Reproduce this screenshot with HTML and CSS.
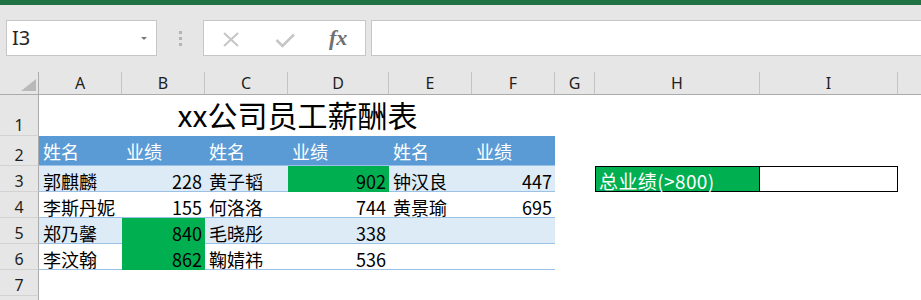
FILE: index.html
```html
<!DOCTYPE html>
<html lang="zh">
<head>
<meta charset="utf-8">
<title>xx公司员工薪酬表</title>
<link rel="stylesheet" href="styles.css">
</head>
<body>
<div class="titlebar"></div>
<div class="toolbar">
  <div class="namebox"><span class="ref">I3</span><span class="caret"></span></div>
  <div class="grip"><i></i><i></i><i></i></div>
  <div class="fbtns">
    <span class="slot"><svg class="ico-x" width="16" height="15" viewBox="0 0 16 15"><path d="M1 1 L15 14 M15 1 L1 14" stroke="#C6C6C6" stroke-width="2" fill="none"/></svg></span>
    <span class="slot"><svg class="ico-ok" width="20" height="15" viewBox="0 0 20 15"><path d="M1.5 7 L7.5 13 L19 1.5" stroke="#C6C6C6" stroke-width="2.6" fill="none"/></svg></span>
    <span class="slot"><span class="fx">fx</span></span>
  </div>
  <div class="finput"></div>
</div>
<div class="sheet">
  <div class="corner"><span class="tri"></span></div>
  <div class="ch">A</div><div class="ch">B</div><div class="ch">C</div><div class="ch">D</div><div class="ch">E</div><div class="ch">F</div><div class="ch">G</div><div class="ch">H</div><div class="ch">I</div><div class="ch last"></div>

  <div class="rh">1</div>
  <div class="c title">xx公司员工薪酬表</div>
  <div class="c"></div><div class="c"></div><div class="c"></div><div class="c"></div>

  <div class="rh">2</div>
  <div class="c t th">姓名</div><div class="c t th">业绩</div><div class="c t th">姓名</div><div class="c t th">业绩</div><div class="c t th">姓名</div><div class="c t th">业绩</div>
  <div class="c"></div><div class="c"></div><div class="c"></div><div class="c"></div>

  <div class="rh">3</div>
  <div class="c t band">郭麒麟</div><div class="c t band num">228</div><div class="c t band">黄子韬</div><div class="c t band num g">902</div><div class="c t band">钟汉良</div><div class="c t band num">447</div>
  <div class="c"></div><div class="c total">总业绩(&gt;800)</div><div class="c result"></div><div class="c"></div>

  <div class="rh">4</div>
  <div class="c t">李斯丹妮</div><div class="c t num">155</div><div class="c t">何洛洛</div><div class="c t num">744</div><div class="c t">黄景瑜</div><div class="c t num">695</div>
  <div class="c"></div><div class="c"></div><div class="c"></div><div class="c"></div>

  <div class="rh">5</div>
  <div class="c t band">郑乃馨</div><div class="c t band num g">840</div><div class="c t band">毛晓彤</div><div class="c t band num">338</div><div class="c t band"></div><div class="c t band"></div>
  <div class="c"></div><div class="c"></div><div class="c"></div><div class="c"></div>

  <div class="rh">6</div>
  <div class="c t">李汶翰</div><div class="c t num g">862</div><div class="c t">鞠婧祎</div><div class="c t num">536</div><div class="c t"></div><div class="c t"></div>
  <div class="c"></div><div class="c"></div><div class="c"></div><div class="c"></div>

  <div class="rh">7</div>
  <div class="c"></div><div class="c"></div><div class="c"></div><div class="c"></div><div class="c"></div><div class="c"></div><div class="c"></div><div class="c"></div><div class="c"></div><div class="c"></div>

  <div class="rh rh-cut"></div>
  <div class="c"></div><div class="c"></div><div class="c"></div><div class="c"></div><div class="c"></div><div class="c"></div><div class="c"></div><div class="c"></div><div class="c"></div><div class="c"></div>
</div>
</body>
</html>
```
FILE: styles.css
```css
html, body {
  margin: 0;
  padding: 0;
}
body {
  width: 921px;
  height: 300px;
  overflow: hidden;
  background: #fff;
  font-family: "Noto Sans CJK SC", sans-serif;
  color: #000;
}
.titlebar {
  height: 5px;
  background: #217346;
}
.toolbar {
  height: 67px;
  box-sizing: border-box;
  background: #E6E6E6;
  display: flex;
  align-items: flex-start;
  padding-top: 15px;
}
.namebox {
  margin-left: 6px;
  width: 151px;
  height: 36px;
  box-sizing: border-box;
  flex-shrink: 0;
  background: #fff;
  border: 1px solid #C6C6C6;
  display: flex;
  align-items: center;
  justify-content: space-between;
  padding: 0 9px 0 5px;
}
.ref {
  font-family: "Noto Sans", sans-serif;
  font-size: 20px;
  line-height: 20px;
  color: #262626;
}
.caret {
  width: 0;
  height: 0;
  border-left: 3px solid transparent;
  border-right: 3px solid transparent;
  border-top: 3px solid #777;
}
.grip {
  width: 46px;
  height: 36px;
  flex-shrink: 0;
  display: flex;
  flex-direction: column;
  align-items: center;
  justify-content: center;
  gap: 3px;
}
.grip i {
  display: block;
  width: 3px;
  height: 3px;
  background: #B4B4B4;
}
.fbtns {
  width: 163px;
  height: 36px;
  box-sizing: border-box;
  flex-shrink: 0;
  background: #fff;
  border: 1px solid #C6C6C6;
  display: flex;
  align-items: center;
}
.slot {
  width: 54px;
  height: 100%;
  display: flex;
  align-items: center;
  justify-content: center;
}
.ico-x { margin-top: 2px; }
.ico-ok { margin-top: 5px; }
.fx {
  font-family: "Liberation Serif", serif;
  font-style: italic;
  font-weight: bold;
  font-size: 22px;
  line-height: 22px;
  color: #707070;
}
.finput {
  margin-left: 5px;
  flex: 1;
  height: 36px;
  box-sizing: border-box;
  background: #fff;
  border: 1px solid #C6C6C6;
  border-right: none;
}
.sheet {
  display: grid;
  grid-template-columns: 39px 83px 83px 83px 101px 83px 83px 40px 165px 138px minmax(0, 1fr);
  grid-template-rows: 23px 41px 30px 26px 26px 26px 26px 26px 4px;
  background: #fff;
}
.corner {
  background: #E6E6E6;
  border-right: 1px solid #ABABAB;
  border-bottom: 1px solid #ABABAB;
  display: flex;
  align-items: flex-end;
  justify-content: flex-end;
  padding: 0 2px 3px 0;
}
.tri {
  display: block;
  width: 15px;
  height: 12px;
  background: #B9B9B9;
  clip-path: polygon(100% 0, 100% 100%, 0 100%);
}
.ch {
  background: #E6E6E6;
  border-right: 1px solid #C4C4C4;
  border-bottom: 1px solid #ABABAB;
  display: flex;
  align-items: center;
  justify-content: center;
  font-family: "Noto Sans", sans-serif;
  font-size: 16px;
  line-height: 16px;
  color: #1E1E1E;
}
.ch.last { border-right: none; }
.rh {
  background: #E6E6E6;
  border-right: 1px solid #ABABAB;
  border-bottom: 1px solid #D2D2D2;
  display: flex;
  align-items: flex-end;
  justify-content: center;
  padding-bottom: 2px;
  font-family: "Noto Sans", sans-serif;
  font-size: 16px;
  line-height: 16px;
  color: #1E1E1E;
}
.rh-cut {
  border-bottom: none;
  padding: 0;
}
.sheet > * { box-sizing: border-box; }
.c {
  display: flex;
  align-items: flex-end;
  padding: 0 3px 1px 4px;
  font-size: 18px;
  line-height: 18px;
  white-space: nowrap;
  min-width: 0;
}
.title {
  grid-column: span 6;
  justify-content: center;
  font-size: 30px;
  line-height: 30px;
  padding-bottom: 7px;
}
.t { border-bottom: 1px solid #9BC2E6; }
.band { background: #DDEBF7; }
.th {
  background: #5B9BD5;
  color: #fff;
  align-items: center;
  padding-bottom: 0;
}
.num { justify-content: flex-end; }
.g {
  background: #00B050;
  border-bottom-color: #00B050;
}
.total {
  background: #00B050;
  color: #fff;
  border: 1px solid #000;
  padding-left: 3px;
  font-size: 19px;
  line-height: 19px;
  letter-spacing: 0.4px;
}
.result {
  border-top: 1px solid #000;
  border-right: 1px solid #000;
  border-bottom: 1px solid #000;
}
```
